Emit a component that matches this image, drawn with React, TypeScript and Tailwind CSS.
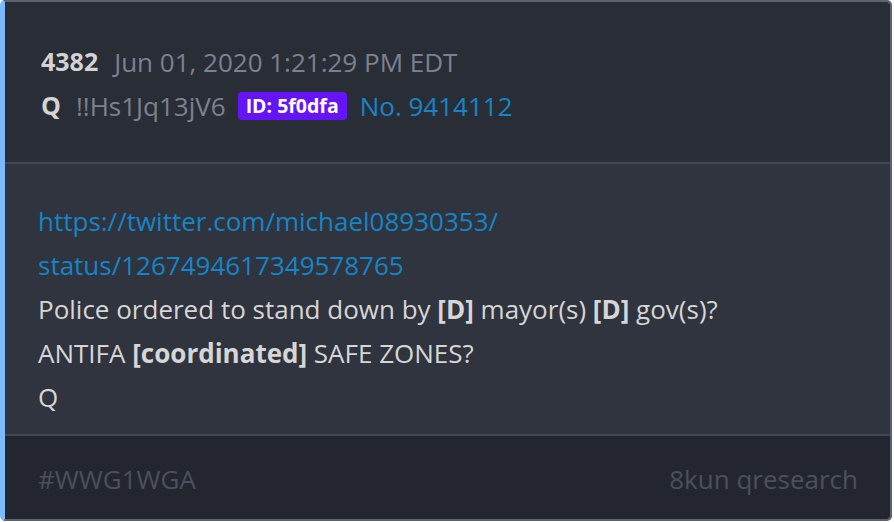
export default function App() {
  return (
    <div className="w-[894px] h-[522px] bg-white" style={{ fontFamily: '"Open Sans", "Noto Sans", sans-serif' }}>
      <div className="w-[892px] h-[521px] flex flex-col overflow-hidden rounded-[5px] border-t-2 border-r-2 border-b-2 border-l-[5px] border-t-[#5d6270] border-r-[#5d6270] border-b-[#5d6270] border-l-[#7db9ff]">
        <div className="h-[162px] shrink-0 bg-[#292d36] pl-[36px] pt-[38px] border-b-2 border-[#434852]">
          <div className="flex items-center h-[44px] text-[26px]">
            <span className="font-bold text-[#d3d3d3] text-[25px]">4382</span>
            <span className="ml-[16px] text-[#7c8190]">Jun 01, 2020 1:21:29 PM EDT</span>
          </div>
          <div className="flex items-center h-[44px] text-[26px]">
            <span className="font-bold text-[#d3d3d3] text-[25px]">Q</span>
            <span className="ml-[15px] text-[#7c8190]">!!Hs1Jq13jV6</span>
            <span className="ml-[12px] h-[28px] px-[8px] rounded-[4px] bg-[#6515f5] text-white font-bold text-[19.5px] flex items-center leading-none">ID: 5f0dfa</span>
            <span className="ml-[13px] text-[#1585c8]">No. 9414112</span>
          </div>
        </div>
        <div className="h-[272px] shrink-0 bg-[#2f343e] pl-[33px] pt-[35px] border-b-2 border-[#434852] text-[26px] leading-[44px] text-[#d6d6d6]">
          <div className="text-[#1585c8]">https://twitter.com/michael08930353/</div>
          <div className="text-[#1585c8]">status/1267494617349578765</div>
          <div>Police ordered to stand down by <b>[D]</b> mayor(s) <b>[D]</b> gov(s)?</div>
          <div>ANTIFA <b>[coordinated]</b> SAFE ZONES?</div>
          <div>Q</div>
        </div>
        <div className="flex-1 bg-[#23262e] pl-[33px] pr-[32px] flex items-center justify-between text-[26px] text-[#4b505d] pt-[3px]">
          <span>#WWG1WGA</span>
          <span>8kun qresearch</span>
        </div>
      </div>
    </div>
  );
}
